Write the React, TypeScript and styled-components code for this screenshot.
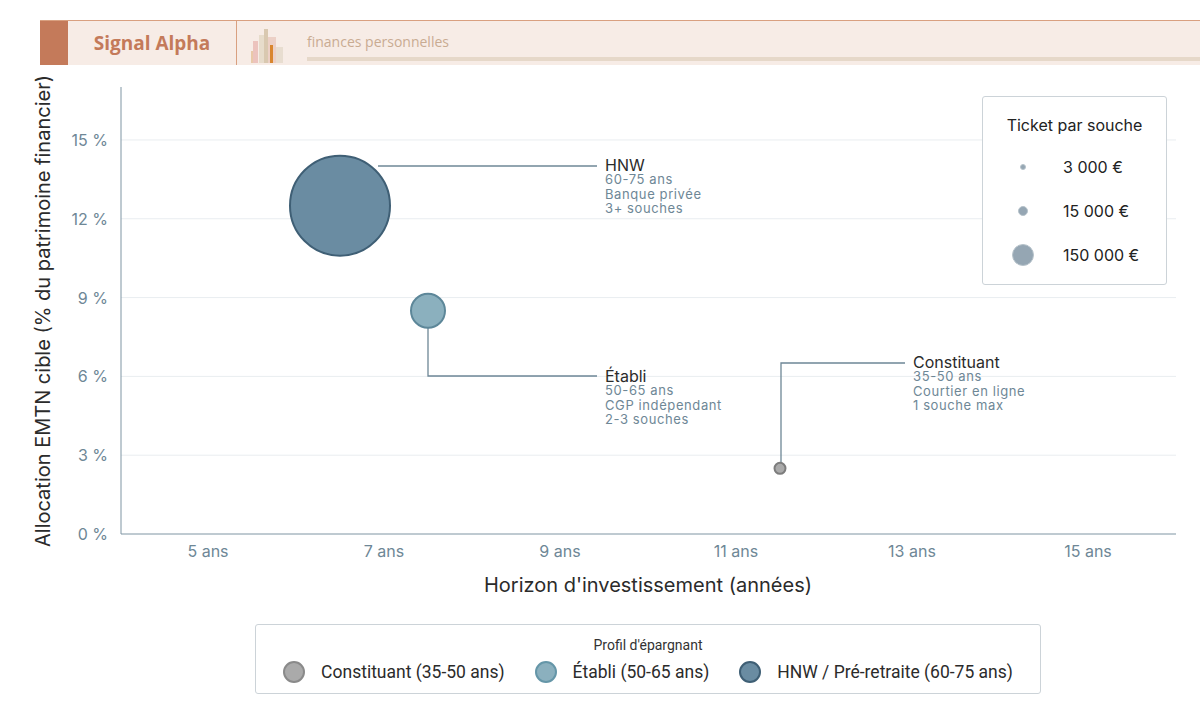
import React from "react";
import styled, { createGlobalStyle } from "styled-components";

const Global = createGlobalStyle`
  body { margin: 0; background: #fff; font-family: Inter, "Noto Sans", sans-serif; }
`;

const X0 = 208 - 5 * 88;
const xs = (v: number) => X0 + v * 88;
const ys = (p: number) => 533 - 64 - p * 26.27;

const bubbles = [
  { x: 6.5, y: 12.5, r: 50, fill: "#6a8ca2", stroke: "#3f5f75" },
  { x: 7.5, y: 8.5, r: 17, fill: "#8bb0be", stroke: "#5d8799" },
  { x: 11.5, y: 2.5, r: 5.5, fill: "#aaaaaa", stroke: "#7d7d7d" },
];

const notes = [
  { x: 605, y: 170 - 64, title: "HNW", lines: ["60-75 ans", "Banque privée", "3+ souches"] },
  { x: 605, y: 381 - 64, title: "Établi", lines: ["50-65 ans", "CGP indépendant", "2-3 souches"] },
  { x: 913, y: 367 - 64, title: "Constituant", lines: ["35-50 ans", "Courtier en ligne", "1 souche max"] },
];

export default function App() {
  return (
    <Page>
      <Global />
      <Header>
        <Swatch />
        <Brand>Signal Alpha</Brand>
        <Tag>
          <svg width="42" height="38" viewBox="0 0 42 38">
            <rect x="2" y="24" width="6" height="12" fill="#e9c9a8" />
            <rect x="4" y="14" width="5" height="22" fill="#ecc3bd" />
            <rect x="10" y="8" width="7" height="28" fill="#e7dccb" />
            <rect x="15" y="2" width="4" height="34" fill="#d9c8b0" />
            <rect x="19" y="10" width="8" height="26" fill="#ecd0c6" />
            <rect x="21" y="18" width="3" height="18" fill="#d9862f" />
            <rect x="27" y="20" width="7" height="16" fill="#e8ddd0" />
          </svg>
          <TagText>finances personnelles</TagText>
        </Tag>
      </Header>
      <ChartArea>
        <svg width="1200" height="546" style={{ display: "block" }}>
          {[3, 6, 9, 12, 15].map((p) => (
            <line key={p} x1={121} x2={1176} y1={ys(p)} y2={ys(p)} stroke="#e9edf0" />
          ))}
          <line x1={121} x2={121} y1={22} y2={ys(0)} stroke="#7f95a3" />
          <line x1={121} x2={1176} y1={ys(0)} y2={ys(0)} stroke="#7f95a3" />
          {[0, 3, 6, 9, 12, 15].map((p) => (
            <text key={p} x={108} y={ys(p) + 6} textAnchor="end" fontSize="16" fill="#6e8796">
              {p} %
            </text>
          ))}
          {[5, 7, 9, 11, 13, 15].map((v) => (
            <text key={v} x={xs(v)} y={492} textAnchor="middle" fontSize="16" fill="#6e8796">
              {v} ans
            </text>
          ))}
          <text x={648} y={527} textAnchor="middle" fontSize="20" fill="#2b2b2b">
            Horizon d'investissement (années)
          </text>
          <text transform="translate(50 246) rotate(-90)" textAnchor="middle" fontSize="20" fill="#2b2b2b">
            Allocation EMTN cible (% du patrimoine financier)
          </text>
          <g stroke="#6e8796" strokeWidth="1.3" fill="none">
            <polyline points={`378,${165 - 64} 597,${165 - 64}`} />
            <polyline points={`428,${327 - 64} 428,${375 - 64} 597,${375 - 64}`} />
            <polyline points={`781,${462 - 64} 781,${362 - 64} 905,${362 - 64}`} />
          </g>
          {bubbles.map((b, i) => (
            <circle key={i} cx={xs(b.x)} cy={ys(b.y)} r={b.r} fill={b.fill} stroke={b.stroke} strokeWidth="2" />
          ))}
          {notes.map((n) => (
            <g key={n.title}>
              <text x={n.x} y={n.y} fontSize="16" fill="#2b2b2b">{n.title}</text>
              {n.lines.map((l, i) => (
                <text key={l} x={n.x} y={n.y + 13 + i * 14.5} fontSize="13" letterSpacing="0.6" fill="#6e8796">{l}</text>
              ))}
            </g>
          ))}
        </svg>
        <SizeLegend>
          <SizeTitle>Ticket par souche</SizeTitle>
          {[
            { r: 2, label: "3 000 €" },
            { r: 4, label: "15 000 €" },
            { r: 10, label: "150 000 €" },
          ].map((s) => (
            <SizeRow key={s.label}>
              <DotSlot>
                <Dot $r={s.r} />
              </DotSlot>
              {s.label}
            </SizeRow>
          ))}
        </SizeLegend>
      </ChartArea>
      <LegendBox>
        <LegendTitle>Profil d'épargnant</LegendTitle>
        <LegendRow>
          <LegendItem><Marker $fill="#aaaaaa" $stroke="#8a8a8a" />Constituant (35-50 ans)</LegendItem>
          <LegendItem><Marker $fill="#8bb0be" $stroke="#6596a8" />Établi (50-65 ans)</LegendItem>
          <LegendItem><Marker $fill="#6a8ca2" $stroke="#3f5f75" />HNW / Pré-retraite (60-75 ans)</LegendItem>
        </LegendRow>
      </LegendBox>
    </Page>
  );
}

const Page = styled.div`
  width: 1200px;
  padding-top: 20px;
`;
const Header = styled.div`
  margin-left: 40px;
  height: 44px;
  display: flex;
  background: #f7ece6;
  border-top: 1px solid #d9a080;
`;
const Swatch = styled.div`
  width: 28px;
  background: #c47a5a;
`;
const Brand = styled.div`
  width: 168px;
  border-right: 1px solid #d9a080;
  display: flex;
  align-items: center;
  justify-content: center;
  font-family: "Open Sans", sans-serif;
  font-weight: 700;
  font-size: 19px;
  color: #c47a5a;
`;
const Tag = styled.div`
  flex: 1;
  display: flex;
  align-items: flex-end;
  padding-left: 12px;
  gap: 16px;
`;
const TagText = styled.div`
  flex: 1;
  font-family: "Open Sans", sans-serif;
  font-size: 14px;
  color: #c9ab92;
  padding-bottom: 6px;
  border-bottom: 4px solid #e6d8c9;
  margin-bottom: 4px;
`;
const ChartArea = styled.div`
  position: relative;
  height: 546px;
`;
const SizeLegend = styled.div`
  position: absolute;
  left: 982px;
  top: 31px;
  width: 185px;
  height: 189px;
  border: 1px solid #ccd3d8;
  border-radius: 3px;
  background: #fff;
  box-sizing: border-box;
  padding-top: 18px;
`;
const SizeTitle = styled.div`
  text-align: center;
  font-size: 16px;
  color: #222;
  margin-bottom: 10px;
`;
const SizeRow = styled.div`
  display: flex;
  align-items: center;
  height: 44px;
  font-size: 16px;
  color: #222;
`;
const DotSlot = styled.div`
  width: 80px;
  display: flex;
  justify-content: center;
`;
const Dot = styled.div<{ $r: number }>`
  width: ${(p) => p.$r * 2}px;
  height: ${(p) => p.$r * 2}px;
  border-radius: 50%;
  background: #95a6b3;
  border: 1px solid #b7c3cb;
`;
const LegendBox = styled.div`
  margin: 13px 0 0 255px;
  width: 786px;
  height: 70px;
  box-sizing: border-box;
  border: 1px solid #ccd3d8;
  border-radius: 3px;
  font-family: Roboto, sans-serif;
  display: flex;
  flex-direction: column;
  align-items: center;
  padding-top: 12px;
`;
const LegendTitle = styled.div`
  font-size: 14px;
  color: #333;
`;
const LegendRow = styled.div`
  display: flex;
  gap: 30px;
  margin-top: 8px;
`;
const LegendItem = styled.div`
  display: flex;
  align-items: center;
  gap: 16px;
  font-size: 17.5px;
  color: #2b2b2b;
`;
const Marker = styled.span<{ $fill: string; $stroke: string }>`
  width: 18px;
  height: 18px;
  border-radius: 50%;
  background: ${(p) => p.$fill};
  border: 2px solid ${(p) => p.$stroke};
`;
